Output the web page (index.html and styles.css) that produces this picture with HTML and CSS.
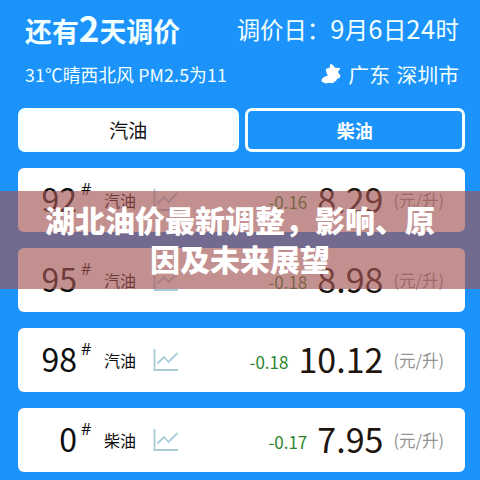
FILE: index.html
```html
<!DOCTYPE html>
<html lang="zh-CN">
<head>
<meta charset="utf-8">
<title>油价</title>
<link rel="stylesheet" href="styles.css">
</head>
<body>
<svg class="defs" width="0" height="0">
  <symbol id="chart" viewBox="0 0 26 24"><path d="M1.500 1v21H25" fill="none" stroke="#a9cbda" stroke-width="1.800"/><path d="M4.500 15.500 11 9l4.500 5L24.500 5" fill="none" stroke="#a9cbda" stroke-width="1.800"/></symbol>
</svg>
<main class="screen">
  <header class="line headline">
    <h1 class="countdown">还有<span class="days">2</span>天调价</h1>
    <p class="date">调价日：<span class="n">9</span>月<span class="n">6</span>日<span class="n">24</span>时</p>
  </header>
  <div class="line info">
    <p class="weather">31℃晴西北风 PM2.5为11</p>
    <p class="place"><svg class="map" viewBox="0 0 20 20"><path d="M9 .5 10.500 0l2 1.800 1.500 2 5.500.2-1.500 2.500-1 1 1 2.500 1.500 1-.5 2.500-3 1.500-1 2-2 1-1 1.200-3.500-.5-4 .8L.5 17.500.8 15l2-2 4-1.200L5.500 9 4.800 5l4-1.500z" fill="#fff"/></svg>广东 深圳市</p>
  </div>
  <nav class="tabs"><div class="tab active">汽油</div><div class="tab">柴油</div></nav>
  <section class="cards">
    <article class="card"><span class="grade">92</span><span class="hash">#</span><span class="fuel">汽油</span><svg class="chart"><use href="#chart"/></svg><span class="change">-0.16</span><span class="price">8.29</span><span class="unit">(元/升)</span></article>
    <article class="card"><span class="grade">95</span><span class="hash">#</span><span class="fuel">汽油</span><svg class="chart"><use href="#chart"/></svg><span class="change">-0.18</span><span class="price">8.98</span><span class="unit">(元/升)</span></article>
    <article class="card"><span class="grade">98</span><span class="hash">#</span><span class="fuel">汽油</span><svg class="chart"><use href="#chart"/></svg><span class="change">-0.18</span><span class="price">10.12</span><span class="unit">(元/升)</span></article>
    <article class="card"><span class="grade">0</span><span class="hash">#</span><span class="fuel">柴油</span><svg class="chart"><use href="#chart"/></svg><span class="change">-0.17</span><span class="price">7.95</span><span class="unit">(元/升)</span></article>
  </section>
  <div class="banner">湖北油价最新调整，影响、原<br>因及未来展望</div>
</main>
</body>
</html>
```
FILE: styles.css
```css
* { box-sizing: border-box; margin: 0; padding: 0; }
body { font-family: "Noto Sans CJK SC", sans-serif; background: #1b93fb; }
.defs { position: absolute; }
.screen { position: relative; width: 480px; height: 480px; overflow: hidden; padding: 9px 15px 0 18px; background: #1b93fb; }
.line { display: flex; justify-content: space-between; white-space: nowrap; color: #f2ffff; padding: 0 6px 0 7px; }
.headline { height: 41px; line-height: 41px; }
.countdown { font-size: 26.900px; font-weight: 700; }
.days { font-size: 35px; line-height: 1; }
.date { font-size: 23.400px; }
.date .n { font-size: 25.500px; line-height: 1; letter-spacing: .5px; }
.info { height: 48px; line-height: 48px; }
.weather { font-size: 17.700px; letter-spacing: .15px; }
.place { display: flex; align-items: center; font-size: 20.800px; word-spacing: 2px; }
.map { width: 20px; height: 20px; margin-right: 7px; }
.tabs { display: flex; gap: 6px; margin-top: 10px; }
.tab { flex: 1; height: 44px; border: 3px solid #f4ffff; border-radius: 7px; color: #fff; font-size: 18px; font-weight: 700; line-height: 38px; text-align: center; }
.tab.active { background: #fff; color: #111; font-size: 19px; font-weight: 400; }
.cards { display: flex; flex-direction: column; gap: 16px; margin-top: 16.300px; }
.card { display: flex; align-items: flex-start; height: 64px; padding-right: 21px; border-radius: 6px; background: #fff; line-height: 1; white-space: nowrap; color: #0c0c0c; }
.grade { width: 59px; margin-top: 14px; text-align: right; font-size: 32px; }
.hash { width: 27px; margin-top: 13px; padding-left: 4px; font-family: "Open Sans", sans-serif; font-size: 16px; }
.fuel { width: 48px; margin-top: 24px; font-size: 16px; }
.chart { width: 26px; height: 24px; margin: 20px auto 0 1px; }
.change { margin: 25px 10px 0 0; font-size: 17px; color: #2a852d; }
.price { margin: 14px 10px 0 0; font-size: 34px; color: #20150e; }
.unit { margin-top: 24px; font-size: 16.500px; color: #929292; }
.banner { position: absolute; left: 0; top: 191px; width: 480px; height: 98px; padding-top: 9px; background: rgba(163, 84, 84, .65); color: #fff; font-size: 30px; font-weight: 900; line-height: 39px; text-align: center; }
```
